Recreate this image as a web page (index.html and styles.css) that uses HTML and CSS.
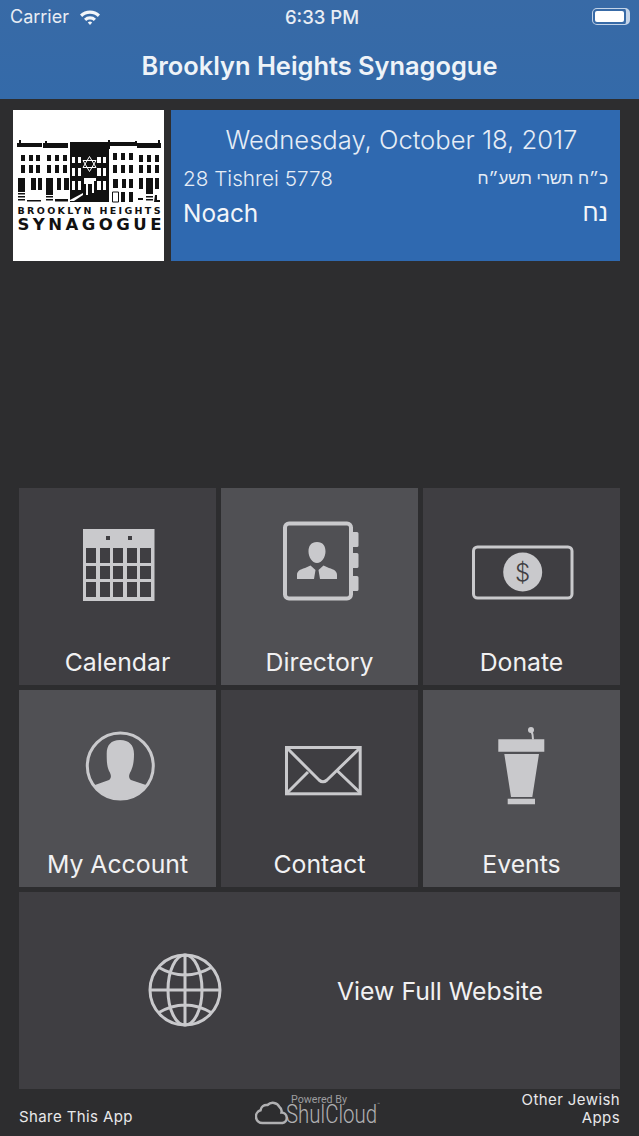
FILE: index.html
```html
<!DOCTYPE html>
<html lang="en">
<head>
    <meta charset="UTF-8">
    <meta name="viewport" content="width=device-width, initial-scale=1.0">
    <title>Brooklyn Heights Synagogue</title>
    <link rel="stylesheet" href="styles.css">
</head>
<body>
    <nav class="topbar">
        <div class="status">
            <div class="status-left">
                <span>Carrier</span>
                <svg class="wifi" viewBox="0 0 22 16">
                    <path d="M1 5.5a14.5 14.5 0 0 1 20 0l-2.2 2.4a11.2 11.2 0 0 0-15.6 0z"/>
                    <path d="M5 9.7a8.8 8.8 0 0 1 12 0l-2.2 2.3a5.6 5.6 0 0 0-7.6 0z"/>
                    <path d="M8.8 13.6a3.2 3.2 0 0 1 4.4 0L11 16z"/>
                </svg>
            </div>
            <span class="clock">6:33 PM</span>
            <div class="battery"><i></i></div>
        </div>
        <h1>Brooklyn Heights Synagogue</h1>
    </nav>

    <section class="header">
        <div class="logo">
            <svg viewBox="0 0 151 151">
                <!-- cornices -->
                <path d="M4 33h2v-3h2v3h21v4H4zM30 33h2v-2h2v2h21v5H30zM57 32h38v-2h2v2h25v-1h2v2h21v-3h2v3h1v5h-24v-2H97v3H57z"/>
                <!-- black house -->
                <rect x="57" y="37" width="39" height="55"/>
                <path class="hole" d="M59 47h3v6h-3zM65 47h3v6h-3zM84 47h4v6h-4zM90 47h3v6h-3zM59 58h3v8h-3zM65 58h3v8h-3zM84 58h4v8h-4zM90 58h3v8h-3zM59 71h3v9h-3zM65 71h3v9h-3zM84 71h4v9h-4zM90 71h3v9h-3zM71 68h12v3h-2v12h-2v-9h-4v11h-2v-11h-2z"/>
                <path class="hole" d="M57 90l13-7v2l-9 6h-4z"/>
                <path class="star" d="M76.5 46.5l6.5 11h-13zM76.5 61.5l-6.5-11h13z"/>
                <!-- left houses -->
                <path d="M8 45h4v6H8zM16 45h4v6h-4zM23 45h4v6h-4zM8 55h4v8H8zM16 55h4v8h-4zM23 55h4v8h-4zM18 68h5v12h-5zM25 68h4v12h-4zM5 68h7v14H5zM34 45h4v6h-4zM42 45h4v6h-4zM50 45h4v6h-4zM34 55h4v8h-4zM42 55h4v8h-4zM50 55h4v8h-4zM33 68h7v17h-7zM44 68h4v12h-4zM51 68h5v12h-5z"/>
                <path d="M5 83h7v1.5H5zM5 86h7v1.5H5zM5 89h7v1.5H5zM33 86h7v1.5h-7zM33 89h7v1.5h-7zM14 90h14v1.5H14zM42 89h13v2.5H42z"/>
                <!-- right houses -->
                <path d="M100 43h4v7h-4zM108 43h4v7h-4zM116 43h4v7h-4zM100 55h4v8h-4zM108 55h4v8h-4zM116 55h4v8h-4zM100 69h5v9h-5zM109 69h4v9h-4zM116 69h4v9h-4zM108 82h4v10h-4zM116 82h4v10h-4zM126 45h4v7h-4zM134 45h4v7h-4zM142 45h4v7h-4zM126 55h4v8h-4zM134 55h4v8h-4zM142 55h4v8h-4zM126 68h4v11h-4zM133 68h7v16h-7zM142 68h4v11h-4zM125 88h5v2h-5zM142 85h2v5h3v2h-6zM133 86h7v1.5h-7zM133 89h7v1.5h-7z"/>
                <path class="line" d="M99.5 82h6v10h-6z"/>
                <text class="logo-line" x="4.5" y="103.5" textLength="143" lengthAdjust="spacing">BROOKLYN HEIGHTS</text>
                <text class="logo-name" x="4.5" y="120" textLength="144" lengthAdjust="spacing">SYNAGOGUE</text>
            </svg>
        </div>
        <div class="dates">
            <div class="today">Wednesday, October 18, 2017</div>
            <div class="date-row">
                <span class="hebrew-date">28 Tishrei 5778</span>
                <span class="he small" dir="rtl" lang="he">כ״ח תשרי תשע״ח</span>
            </div>
            <div class="date-row parsha">
                <span>Noach</span>
                <span class="he" dir="rtl" lang="he">נח</span>
            </div>
        </div>
    </section>

    <main class="tiles">
        <a class="tile">
            <svg viewBox="0 0 197 150">
                <path class="fill" fill-rule="evenodd" d="M64 41h71.5v72H64zM67 60v15h10V60zM81 60v15h10V60zM94 60v15h10V60zM108 60v15h10V60zM121 60v15h11V60zM67 78v13h10V78zM81 78v13h10V78zM94 78v13h10V78zM108 78v13h10V78zM121 78v13h11V78zM67 94v15h10V94zM81 94v15h10V94zM94 94v15h10V94zM108 94v15h10V94zM121 94v15h11V94zM87 48v4h4v-4zM109 48v4h4v-4z"/>
            </svg>
            <span>Calendar</span>
        </a>
        <a class="tile light">
            <svg viewBox="0 0 197 150">
                <rect class="stroke" x="64" y="35.5" width="66" height="75" rx="4"/>
                <path class="fill" d="M131 44h5a1.5 1.5 0 0 1 1.5 1.5v12a1.5 1.5 0 0 1-1.5 1.5h-5zM131 65h5a1.5 1.5 0 0 1 1.5 1.5v12a1.5 1.5 0 0 1-1.5 1.5h-5zM131 88h5a1.5 1.5 0 0 1 1.5 1.5v12a1.5 1.5 0 0 1-1.5 1.5h-5z"/>
                <path class="fill" d="M96 54c6 0 8.5 4 8.5 9.5S101 75 96 75s-8.5-6-8.5-11.5S90 54 96 54zM76 91v-4c0-4 3-5.5 8-7l5.5-2.5L94.5 82l-1.5 9zM116 91v-4c0-4-3-5.5-8-7l-5.5-2.5L97.5 82l1.5 9z"/>
            </svg>
            <span>Directory</span>
        </a>
        <a class="tile">
            <svg viewBox="0 0 197 150">
                <rect class="stroke thin" x="50.5" y="59" width="98.5" height="51" rx="4"/>
                <circle class="fill" cx="99.7" cy="84" r="19.5"/>
                <text class="dollar" x="99.7" y="92.5">$</text>
            </svg>
            <span>Donate</span>
        </a>
        <a class="tile light">
            <svg viewBox="0 0 197 150">
                <defs><clipPath id="rond"><circle cx="101.3" cy="76" r="33"/></clipPath></defs>
                <circle class="stroke thin" cx="101.3" cy="76" r="33"/>
                <path class="fill" clip-path="url(#rond)" d="M76 95l14-5c3-2 2-6 0-9-2-5-2.3-9-2.3-17 0-9 4.3-14 13.3-14s14 5 14 14c0 8-1 12-3 17-2 3-3 7 0 9l15 5 13 25H60z"/>
            </svg>
            <span>My Account</span>
        </a>
        <a class="tile">
            <svg viewBox="0 0 197 150">
                <rect class="stroke thin" x="65.5" y="57.5" width="73.7" height="46.3"/>
                <path class="stroke thin" d="M66 58l32 32q4 3.5 8 0l33-32M66 103l21-21M139.5 103l-24-23"/>
            </svg>
            <span>Contact</span>
        </a>
        <a class="tile light">
            <svg viewBox="0 0 197 150">
                <circle class="fill" cx="108" cy="40" r="3"/>
                <path class="stroke mic" d="M108 40q2 4 2 9.5"/>
                <path class="fill" d="M75.3 49.3h46v12.4h-46zM81.3 64H116l-6.7 43H88zM84.7 108.700H112v5.600H84.700z"/>
            </svg>
            <span>Events</span>
        </a>
        <a class="tile wide">
            <svg viewBox="0 0 318 197">
                <circle class="stroke thin" cx="166" cy="98" r="35"/>
                <ellipse class="stroke thin" cx="166" cy="98" rx="17" ry="35"/>
                <path class="stroke thin" d="M166 63v70M131 98h70M139 75q27 16 54 0M139 121q27-16 54 0"/>
            </svg>
            <span>View Full Website</span>
        </a>
    </main>

    <footer class="bottom">
        <a class="share">Share This App</a>
        <svg class="shulcloud" viewBox="0 0 125 44">
            <text class="powered" x="36" y="11" textLength="56" lengthAdjust="spacingAndGlyphs">Powered By</text>
            <path class="cloud" d="M7.500 31a6.500 6.500 0 0 1-2-12.700 6 6 0 0 1 7-5.300 7.500 7.500 0 0 1 12 2 5.500 5.500 0 0 1 2 5.500 5.300 5.300 0 0 1 1 10.500z"/>
            <text class="shul" x="31" y="31" textLength="91" lengthAdjust="spacingAndGlyphs">ShulCloud</text>
            <text class="tm" x="122" y="14">™</text>
        </svg>
        <a class="others">Other Jewish<br>Apps</a>
    </footer>
</body>
</html>
```

FILE: styles.css
```css
* {
    box-sizing: border-box;
}
html, body {
    margin: 0;
    padding: 0;
}
body {
    font-family: Inter, "Liberation Sans", sans-serif;
    color: #f4f5f6;
    width: 639px;
    height: 1136px;
    overflow: hidden;
    background: #2d2d2f;
}
.topbar {
    height: 99px;
    background: linear-gradient(to bottom, #386aa6, #346aa9);
}
.status {
    height: 33px;
    padding: 0 9px 0 10px;
    display: grid;
    grid-template-columns: 1fr auto 1fr;
    align-items: center;
    font-size: 18px;
    color: #e8edf4;
}
.status-left {
    display: flex;
    align-items: center;
    gap: 10px;
}
.wifi {
    width: 22px;
    height: 16px;
    fill: #f2f5f9;
}
.clock {
    font-size: 18.5px;
    font-weight: 500;
    margin-left: 4px;
}
.battery {
    justify-self: end;
    width: 38px;
    height: 17px;
    padding: 2px;
    border: 1px solid #c4d4e8;
    border-right-width: 4px;
    border-radius: 5px;
}
.battery i {
    display: block;
    height: 100%;
    background: #fff;
    border-radius: 2px;
}
h1 {
    margin: 0;
    text-align: center;
    font-size: 25.4px;
    line-height: 66px;
    font-weight: 600;
    color: #eef3f8;
}
.header {
    display: flex;
    gap: 7px;
    padding: 11px 19px 0 13px;
}
.logo {
    width: 151px;
    height: 151px;
    background: #fff;
    flex: none;
}
.logo svg {
    display: block;
    width: 151px;
    height: 151px;
    fill: #111;
}
.logo .hole {
    fill: #fff;
}
.logo .star {
    fill: none;
    stroke: #fff;
    stroke-width: 1;
}
.logo .line {
    fill: none;
    stroke: #111;
}
.logo-line {
    font-family: "DejaVu Sans", sans-serif;
    font-size: 9.5px;
    font-weight: 700;
}
.logo-name {
    font-family: "DejaVu Sans", sans-serif;
    font-size: 16.5px;
    font-weight: 700;
}
.dates {
    flex: 1;
    height: 151px;
    background: #2f69b0;
    padding: 12px 12px 0 12px;
    color: #e6edf6;
}
.today {
    font-size: 25.6px;
    line-height: 36px;
    text-align: center;
    padding-left: 12px;
    font-weight: 300;
    margin-bottom: 6px;
}
.date-row {
    display: flex;
    justify-content: space-between;
    align-items: center;
    font-size: 20.7px;
    line-height: 30px;
    font-weight: 300;
}
.parsha {
    font-size: 24.4px;
    line-height: 38px;
    color: #f2f5f9;
    font-weight: 400;
}
.he {
    font-family: "Liberation Sans", "DejaVu Sans", sans-serif;
}
.he.small {
    font-size: 16.8px;
}
.tiles {
    margin: 227px 0 0 19px;
    display: grid;
    grid-template-columns: repeat(3, 197px);
    grid-auto-rows: 197px;
    gap: 5px;
}
.tile {
    display: flex;
    flex-direction: column;
    align-items: center;
    background: #3f3e42;
    font-size: 24.8px;
    color: #f1f1f2;
}
.tile.light {
    background: #505054;
}
.tile svg {
    display: block;
    width: 197px;
    height: 150px;
    flex: none;
}
.tile span {
    line-height: 45px;
    padding-top: 2px;
}
.tile.wide {
    grid-column: span 3;
    flex-direction: row;
}
.tile.wide svg {
    width: 318px;
    height: 197px;
}
.fill {
    fill: #c9c9cc;
}
.stroke {
    fill: none;
    stroke: #c9c9cc;
    stroke-width: 4;
}
.stroke.thin {
    stroke-width: 3;
}
.stroke.mic {
    stroke-width: 2;
}
.dollar {
    font-family: Inter, sans-serif;
    font-size: 24px;
    font-weight: 300;
    text-anchor: middle;
    fill: #3f3e42;
}
.bottom {
    height: 47px;
    padding: 0 19px;
    display: grid;
    grid-template-columns: 236px 125px 1fr;
    align-items: center;
    font-size: 15px;
    letter-spacing: 0.4px;
    color: #e8e8ea;
}
.share {
    padding-top: 8px;
}
.others {
    justify-self: end;
    text-align: right;
    line-height: 18px;
    padding-bottom: 7px;
}
.shulcloud {
    display: block;
    width: 125px;
    height: 44px;
    align-self: start;
    margin-top: 3px;
}
.powered {
    font-family: Roboto, sans-serif;
    font-size: 10.5px;
    letter-spacing: 0;
    fill: #9d9d9f;
}
.shul {
    font-family: Roboto, sans-serif;
    font-size: 25px;
    font-weight: 300;
    letter-spacing: 0;
    fill: #b0b0b2;
}
.tm {
    font-family: Roboto, sans-serif;
    font-size: 5px;
    letter-spacing: 0;
    fill: #9d9d9f;
}
.cloud {
    fill: none;
    stroke: #b0b0b2;
    stroke-width: 2.5;
}
```
